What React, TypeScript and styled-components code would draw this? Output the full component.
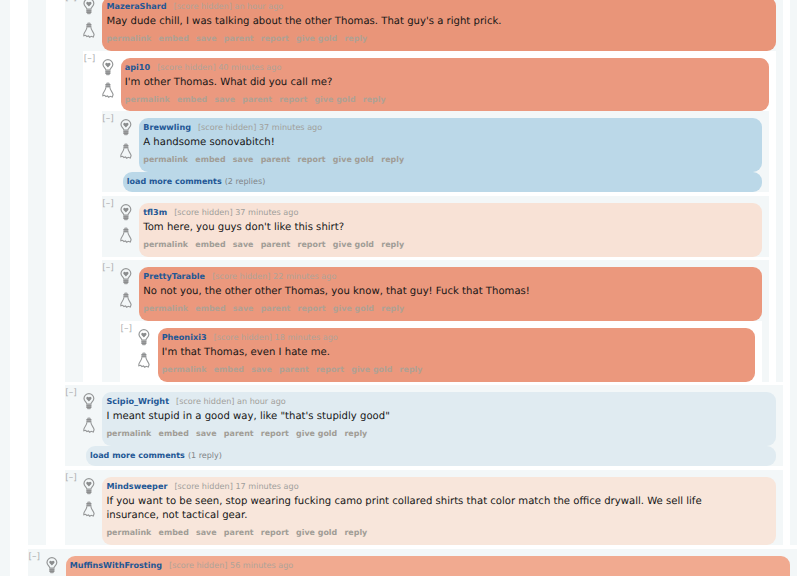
import React from "react";
import styled, { createGlobalStyle } from "styled-components";

const GlobalStyle = createGlobalStyle`
  html, body { margin: 0; padding: 0; background: #fff; }
  body {
    overflow: hidden;
    font-family: "DejaVu Sans", Verdana, sans-serif;
    text-rendering: geometricPrecision;
  }
`;

const Page = styled.main`
  width: 797px;
  height: 576px;
  overflow: hidden;
  background: #f3f7f8;
  box-sizing: border-box;
  padding-left: 9.8px;
`;

const Board = styled.div`
  height: 576px;
  overflow: hidden;
  background: #fff;
  padding-left: 18.2px;
  display: flex;
  flex-direction: column;
  gap: 3.8px;
`;

const Ancestor = styled.section<{ $shaded: boolean }>`
  flex-shrink: 0;
  background: ${(p) => (p.$shaded ? "#f3f7f8" : "#fff")};
  padding: 0 7px 0 18.4px;
  display: flex;
  flex-direction: column;
  gap: 3.8px;
`;

const Thread = styled.article<{ $shaded: boolean; $cut?: boolean }>`
  flex-shrink: 0;
  background: ${(p) => (p.$shaded ? "#f3f7f8" : "#fff")};
  padding: 7px 7px 0 0;
  margin-top: ${(p) => (p.$cut ? "-9.8px" : "0")};
`;

const Entry = styled.div`
  display: flex;
`;

const Toggle = styled.span`
  width: 18.4px;
  flex-shrink: 0;
  box-sizing: border-box;
  padding-left: 0.6px;
  margin-top: -4.2px;
  font-size: 9px;
  line-height: 11px;
  color: #adafb0;
`;

const Votes = styled.div`
  width: 19.3px;
  flex-shrink: 0;
  display: flex;
  flex-direction: column;
  gap: 6.5px;
  padding-top: 1px;
`;

const Bubble = styled.div<{ $color: string }>`
  flex: 1;
  min-width: 0;
  min-height: 53.6px;
  box-sizing: border-box;
  padding: 2.9px 40px 5.7px 4px;
  border-radius: 9px;
  background: ${(p) => p.$color};
`;

const Tagline = styled.div`
  display: flex;
  gap: 7px;
  height: 12px;
  line-height: 12px;
  font-size: 8.1px;
  white-space: nowrap;
`;

const Author = styled.a`
  font-weight: bold;
  color: #235795;
`;

const Meta = styled.span<{ $warm: boolean }>`
  color: ${(p) => (p.$warm ? "#b0a398" : "#a09f9b")};
`;

const Body = styled.p`
  margin: 3px 0 2.4px;
  font-size: 10.11px;
  line-height: 14.6px;
  color: #161616;
`;

const Actions = styled.div<{ $warm: boolean }>`
  display: flex;
  gap: 7.2px;
  height: 13px;
  line-height: 13px;
  font-size: 7.93px;
  font-weight: bold;
  white-space: nowrap;
  color: ${(p) => (p.$warm ? "#b0a194" : "#a19d96")};
`;

const More = styled.div<{ $color: string }>`
  height: 20.2px;
  line-height: 19.6px;
  margin-left: 21.2px;
  padding-left: 4px;
  border-radius: 9px;
  background: ${(p) => p.$color};
  font-size: 8.03px;
  color: #818689;
`;

const MoreLink = styled.a`
  font-weight: bold;
  color: #235795;
  margin-right: 3px;
`;

const Replies = styled.div`
  padding-left: 18.4px;
  display: flex;
  flex-direction: column;
  gap: 3.8px;
`;

const BulbUp = () => (
  <svg width="12" height="17" viewBox="0 0 12 17" fill="none" stroke="#959798" strokeWidth="1.2">
    <path d="M3.9 11.2C3.9 9.2 1 8.3 1 5.4A4.9 4.7 0 0 1 10.8 5.4C10.8 8.3 7.9 9.2 7.9 11.2Z" />
    <path d="M5.9 8.4L3.5 5.9C2.5 4.3 4.8 2.9 5.9 4.4C7 2.9 9.3 4.3 8.3 5.9Z" fill="#8a8c8d" stroke="none" />
    <path d="M3.4 11.7H8.4V14.4L7.2 16.3H4.6L3.4 14.4Z" fill="#a0a2a3" stroke="none" />
    <path d="M3.4 12.8H8.4M3.6 14.5H8.2" stroke="#868889" strokeWidth="0.8" />
  </svg>
);

const BulbDown = () => (
  <svg width="12" height="17" viewBox="0 0 12 17" fill="none" stroke="#959798" strokeWidth="1.1">
    <path d="M4.8 0.6H7L8.3 2.4V5.4H3.5V2.4Z" fill="#a8aaab" stroke="none" />
    <path d="M3.5 2.5H8.3M3.5 4.3H8.3" stroke="#868889" strokeWidth="0.8" />
    <path d="M3.9 5.2C3.9 8.2 1.4 9.6 0.9 12.2L0.8 13.8L2.7 13.3L3.9 14.6L5.5 14L6.7 15.2L8.2 14.3L10.3 15L11.1 12.7C10.7 9.9 7.9 8.4 7.9 5.2" />
  </svg>
);

const actionNames = ["permalink", "embed", "save", "parent", "report", "give gold", "reply"];

type CommentProps = {
  author: string;
  age: string;
  text?: string;
  color: string;
  shaded?: boolean;
  warm?: boolean;
  cut?: boolean;
  more?: string;
  children?: React.ReactNode;
};

const Comment = ({ author, age, text, color, shaded = false, warm = false, cut, more, children }: CommentProps) => (
  <Thread $shaded={shaded} $cut={cut}>
    <Entry>
      <Toggle>[–]</Toggle>
      <Votes>
        <BulbUp />
        {text && <BulbDown />}
      </Votes>
      <Bubble $color={color}>
        <Tagline>
          <Author>{author}</Author>
          <Meta $warm={warm}>[score hidden] {age} ago</Meta>
        </Tagline>
        {text && (
          <>
            <Body>{text}</Body>
            <Actions $warm={warm}>
              {actionNames.map((name) => (
                <span key={name}>{name}</span>
              ))}
            </Actions>
          </>
        )}
      </Bubble>
    </Entry>
    {more && (
      <More $color={color}>
        <MoreLink>load more comments</MoreLink>({more})
      </More>
    )}
    {children && <Replies>{children}</Replies>}
  </Thread>
);

export default function App() {
  return (
    <>
      <GlobalStyle />
      <Page>
        <Board>
          <Ancestor $shaded>
            <Ancestor $shaded={false}>
              <Comment cut shaded warm author="MazeraShard" age="an hour" color="#e99579"
                text="May dude chill, I was talking about the other Thomas. That guy's a right prick.">
                <Comment warm author="api10" age="40 minutes" color="#eb997f"
                  text="I'm other Thomas. What did you call me?">
                  <Comment shaded author="Brewwling" age="37 minutes" color="#bbd8e8" more="2 replies"
                    text="A handsome sonovabitch!" />
                  <Comment shaded author="tfl3m" age="37 minutes" color="#f8e2d6"
                    text="Tom here, you guys don't like this shirt?" />
                  <Comment shaded warm author="PrettyTarable" age="22 minutes" color="#eb987d"
                    text="No not you, the other other Thomas, you know, that guy! Fuck that Thomas!">
                    <Comment warm author="Pheonixi3" age="18 minutes" color="#eb987d"
                      text="I'm that Thomas, even I hate me." />
                  </Comment>
                </Comment>
              </Comment>
              <Comment shaded author="Scipio_Wright" age="an hour" color="#e0ebf1" more="1 reply"
                text={'I meant stupid in a good way, like "that\'s stupidly good"'} />
              <Comment shaded author="Mindsweeper" age="17 minutes" color="#f8e6db"
                text="If you want to be seen, stop wearing fucking camo print collared shirts that color match the office drywall. We sell life insurance, not tactical gear." />
            </Ancestor>
          </Ancestor>
          <Comment shaded warm author="MuffinsWithFrosting" age="56 minutes" color="#f1aa90" />
        </Board>
      </Page>
    </>
  );
}
